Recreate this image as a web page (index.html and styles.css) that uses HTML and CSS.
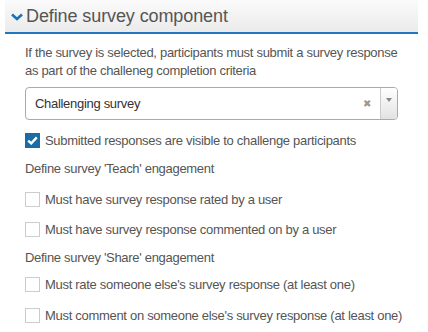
FILE: index.html
```html
<!DOCTYPE html>
<html lang="en">
<head>
  <meta charset="UTF-8" />
  <title>Define survey component</title>
  <link rel="stylesheet" href="styles.css">
</head>
<body>
  <div class="panel">
    <div class="panel-header">
      <svg class="chevron" width="12" height="8" viewBox="0 0 12 8">
        <path d="M1 1.5 L6 6 L11 1.5" fill="none" stroke="#1b72b5" stroke-width="2.6"/>
      </svg>
      <span class="panel-title">Define survey component</span>
    </div>
    <div class="panel-body">
      <p class="hint">If the survey is selected, participants must submit a survey response as part of the challeneg completion criteria</p>

      <div class="select-box">
        <span class="select-value">Challenging survey</span>
        <span class="select-clear">&#10006;</span>
        <span class="select-arrow"><span class="triangle"></span></span>
      </div>

      <label class="check-row">
        <span class="check checked">
          <svg width="11" height="9" viewBox="0 0 11 9">
            <path d="M1.2 4.6 L4.2 7.4 L9.8 1.4" fill="none" stroke="#fff" stroke-width="2.4"/>
          </svg>
        </span>
        Submitted responses are visible to challenge participants
      </label>

      <div class="group-label">Define survey 'Teach' engagement</div>
      <label class="check-row"><span class="check"></span>Must have survey response rated by a user</label>
      <label class="check-row"><span class="check"></span>Must have survey response commented on by a user</label>

      <div class="group-label">Define survey 'Share' engagement</div>
      <label class="check-row share-first"><span class="check"></span>Must rate someone else's survey response (at least one)</label>
      <label class="check-row share-last"><span class="check"></span>Must comment on someone else's survey response (at least one)</label>
    </div>
  </div>
</body>
</html>
```

FILE: styles.css
```css
body {
  margin: 0;
  background-color: #ffffff;
  font-family: "Liberation Sans", Arial, sans-serif;
  font-size: 13px;
  letter-spacing: -0.3px;
  color: #555;
}
.panel {
  margin-left: 5px;
  width: 413px;
}
.panel-header {
  display: flex;
  align-items: center;
  height: 32px;
  padding-left: 6px;
  background: linear-gradient(to bottom, #fbfbfb, #ebebeb);
  border-bottom: 2px solid #1f78c1;
}
.chevron {
  margin-right: 3px;
  margin-top: 1px;
}
.panel-title {
  font-size: 18px;
  letter-spacing: -0.1px;
  color: #555;
}
.panel-body {
  padding: 0 20px;
}
.hint {
  margin: 10px 0 0;
  line-height: 18px;
}
.select-box {
  display: flex;
  align-items: center;
  height: 31px;
  margin-top: 7px;
  border: 1px solid #aaa;
  border-radius: 4px;
  background-color: #fff;
  overflow: hidden;
}
.select-value {
  flex: 1;
  padding-left: 9px;
  color: #333;
}
.select-clear {
  width: 16px;
  font-size: 10px;
  color: #999;
  margin-right: 1px;
}
.select-arrow {
  display: flex;
  align-items: center;
  justify-content: center;
  width: 16px;
  height: 100%;
  border-left: 1px solid #ccc;
  background: linear-gradient(to bottom, #fff, #e2e2e2);
}
.triangle {
  border-left: 3px solid transparent;
  border-right: 3px solid transparent;
  border-top: 4px solid #888;
  margin-top: -8px;
}
.check-row {
  display: flex;
  align-items: center;
  height: 20px;
  margin-top: 10px;
  white-space: nowrap;
}
.check {
  display: flex;
  align-items: center;
  justify-content: center;
  flex-shrink: 0;
  width: 13px;
  height: 13px;
  margin-right: 5px;
  border: 1px solid #ccc;
  background-color: #fff;
}
.check.checked {
  background-color: #1a6ba6;
  border-color: #1a6ba6;
}
.group-label {
  height: 20px;
  line-height: 20px;
  margin-top: 9px;
}
.check-row.share-first {
  margin-top: 6px;
}
.check-row.share-last {
  margin-top: 11px;
}
```
